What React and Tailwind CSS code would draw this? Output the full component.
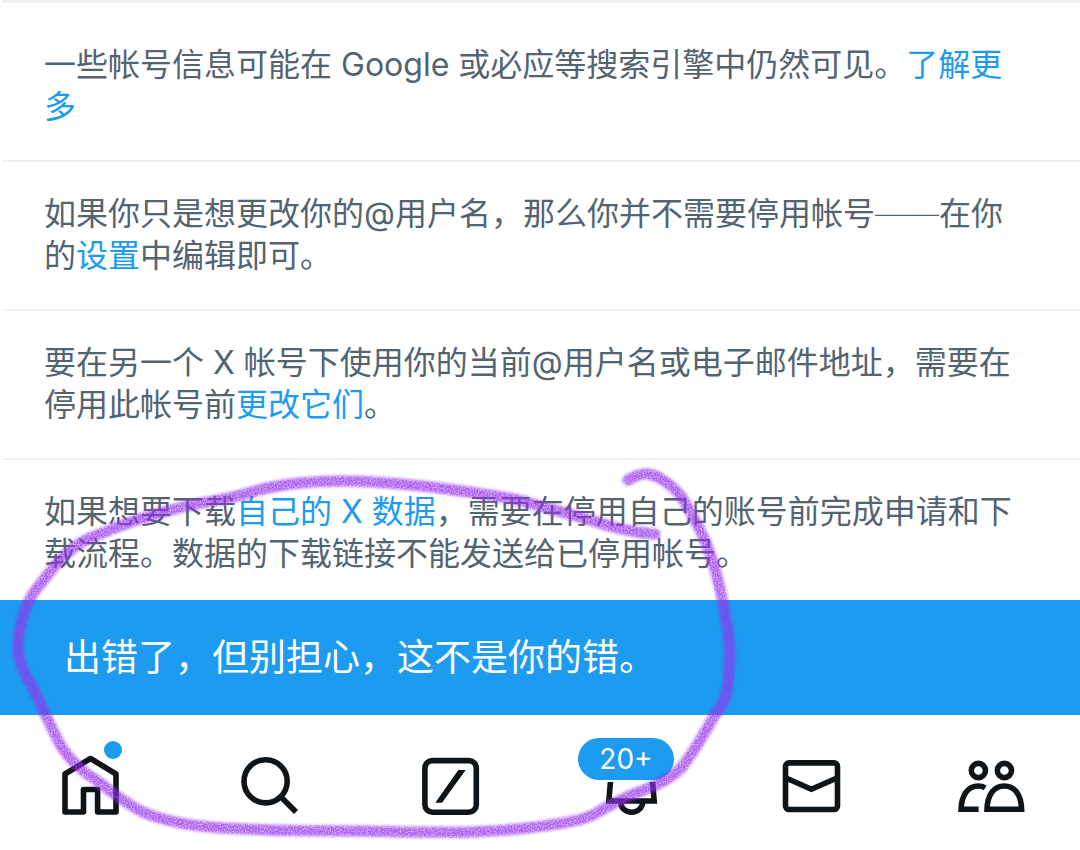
import React, { useMemo } from "react";
import clsx from "clsx";

const notices = [
  {
    id: "search",
    before: "一些帐号信息可能在 Google 或必应等搜索引擎中仍然可见。",
    link: "了解更多",
    after: "",
  },
  {
    id: "username",
    before: (
      <>
        如果你只是想更改你的@用户名，那么你并不需要停用帐号<span className="font-extralight">——</span>在你的
      </>
    ),
    link: "设置",
    after: "中编辑即可。",
  },
  {
    id: "reuse",
    before: "要在另一个 X 帐号下使用你的当前@用户名或电子邮件地址，需要在停用此帐号前",
    link: "更改它们",
    after: "。",
  },
  {
    id: "data",
    before: "如果想要下载",
    link: "自己的 X 数据",
    after: "，需要在停用自己的账号前完成申请和下载流程。数据的下载链接不能发送给已停用帐号。",
  },
];

// centre line of the hand-drawn loop
const loopPoints = [
  [628, 480], [636, 476], [648, 474], [663, 480], [680, 495], [693, 517], [706, 543],
  [716, 573], [723, 603], [729, 640], [729, 673], [725, 698], [712, 720], [699, 742],
  [681, 768], [660, 783], [629, 796], [607, 807], [582, 819], [527, 828], [470, 832],
  [410, 832], [360, 831], [267, 830], [200, 826], [167, 820], [143, 812], [123, 800],
  [100, 783], [80, 768], [63, 749], [48, 720], [34, 690], [22, 667], [18, 645],
  [22, 620], [31, 597], [46, 577], [62, 558], [82, 542], [110, 530], [140, 519],
  [187, 506], [233, 497], [267, 488], [300, 483], [347, 481], [400, 484], [447, 489],
  [513, 499], [547, 508], [580, 517], [613, 527], [637, 532], [655, 534],
];

function smoothPath(points) {
  let d = `M${points[0][0]} ${points[0][1]}`;
  for (let i = 0; i < points.length - 1; i++) {
    const p0 = points[i - 1] || points[i];
    const p1 = points[i];
    const p2 = points[i + 1];
    const p3 = points[i + 2] || p2;
    const c1 = [p1[0] + (p2[0] - p0[0]) / 6, p1[1] + (p2[1] - p0[1]) / 6];
    const c2 = [p2[0] - (p3[0] - p1[0]) / 6, p2[1] - (p3[1] - p1[1]) / 6];
    d += ` C${c1[0]} ${c1[1]} ${c2[0]} ${c2[1]} ${p2[0]} ${p2[1]}`;
  }
  return d;
}

function Scribble() {
  const d = useMemo(() => smoothPath(loopPoints), []);

  return (
    <svg
      className="pointer-events-none absolute left-0 top-0 z-20"
      width="1080"
      height="850"
      viewBox="0 0 1080 850"
      fill="none"
      aria-hidden="true"
    >
      <defs>
        <filter
          id="crayon"
          filterUnits="userSpaceOnUse"
          x="0"
          y="440"
          width="780"
          height="410"
          colorInterpolationFilters="sRGB"
        >
          <feGaussianBlur in="SourceGraphic" stdDeviation="1.5" result="soft" />
          <feTurbulence type="fractalNoise" baseFrequency="0.7" numOctaves="2" seed="4" result="noise" />
          <feColorMatrix
            in="noise"
            type="matrix"
            values="0 0 0 0 0  0 0 0 0 0  0 0 0 0 0  1.5 0 0 0 0.1"
            result="grain"
          />
          <feComposite in="soft" in2="grain" operator="in" />
        </filter>
      </defs>
      <path
        d={d}
        stroke="#9632ea"
        strokeOpacity="0.78"
        strokeWidth="11"
        strokeLinecap="round"
        strokeLinejoin="round"
        filter="url(#crayon)"
      />
    </svg>
  );
}

function NavIcon({ children }) {
  return (
    <svg
      width="66"
      height="66"
      viewBox="0 0 66 66"
      fill="none"
      stroke="#0f1419"
      strokeWidth="5.6"
      className="overflow-visible"
      aria-hidden="true"
    >
      {children}
    </svg>
  );
}

function NavItem({ label, children }) {
  return (
    <a href="#" aria-label={label} className="flex justify-center">
      <span className="relative">{children}</span>
    </a>
  );
}

function Notice({ notice, first, last }) {
  return (
    <section
      className={clsx(
        "ml-0.5 border-[#eff3f4] pl-[42px] pr-[54px]",
        first ? "border-t-3 pt-[41px]" : "border-t-2 pt-[31px]",
        last ? "pb-[25px]" : "pb-8"
      )}
    >
      <p className="text-[32px] leading-[42px] text-[#536471]">
        {notice.before}
        <a href="#" className="text-[#1d9bf0]">
          {notice.link}
        </a>
        {notice.after}
      </p>
    </section>
  );
}

function BottomNav() {
  return (
    <nav className="grid grid-cols-6 bg-white pb-8 pt-[38px]">
      <NavItem label="主页">
        <NavIcon>
          <path d="M8 21 L33.5 5.5 L59 21 V59 H40.6 V36.5 H26.5 V59 H8 Z" strokeLinejoin="round" />
        </NavIcon>
        <span className="absolute -top-3 left-[47px] size-[18px] rounded-full bg-[#1d9bf0]" />
      </NavItem>
      <NavItem label="搜索">
        <NavIcon>
          <circle cx="28.6" cy="28.3" r="21.6" />
          <path d="M43.5 43.5 L59 59" />
        </NavIcon>
      </NavItem>
      <NavItem label="Grok">
        <NavIcon>
          <rect x="7.9" y="7.6" width="51.4" height="51.6" rx="7.5" />
          <path d="M18.3 49.7 L41.3 17 H48.7 L25 49.7 Z" fill="#0f1419" stroke="none" />
        </NavIcon>
      </NavItem>
      <NavItem label="通知">
        <NavIcon>
          <path d="M11.8 48 L13.8 25 C14.8 13 23 5 34.5 5 S54.2 13 55.2 25 L57.2 48 Z" />
          <path d="M23.6 49 C24 55.4 28.8 59.2 34.6 59.2 S45.2 55.4 45.8 49" />
        </NavIcon>
        <span className="absolute -left-[19px] -top-[15px] flex h-[42px] w-24 items-center justify-center rounded-full bg-[#1d9bf0] text-[28px] leading-none text-white ring-2 ring-white">
          20+
        </span>
      </NavItem>
      <NavItem label="私信">
        <NavIcon>
          <rect x="8.5" y="9.9" width="52" height="46.6" rx="3.6" />
          <path d="M9 25 L34.4 36.2 L60 25" />
        </NavIcon>
      </NavItem>
      <NavItem label="社群">
        <NavIcon>
          <circle cx="21.4" cy="17.5" r="7.1" />
          <circle cx="47.4" cy="17.5" r="7.1" />
          <path d="M21.6 56.3 H4.1 C4.6 41.6 11 33 21.4 33 C24 33 26 33.5 28.2 34.8" />
          <path d="M30 56.3 C30.4 41.6 37 33 47.3 33 S64.2 41.6 64.6 56.3 Z" />
        </NavIcon>
      </NavItem>
    </nav>
  );
}

function App() {
  return (
    <div className="relative min-h-screen overflow-hidden bg-white font-['Inter','Noto_Sans_CJK_SC',sans-serif]" lang="zh-CN">
      <main>
        {notices.map((notice, i) => (
          <Notice key={notice.id} notice={notice} first={i === 0} last={i === notices.length - 1} />
        ))}
      </main>

      <div role="alert" className="bg-[#1d9bf0] px-16 py-8 text-[37px] leading-[51px] text-white">
        出错了，但别担心，这不是你的错。
      </div>

      <BottomNav />
      <Scribble />
    </div>
  );
}

export default App;
